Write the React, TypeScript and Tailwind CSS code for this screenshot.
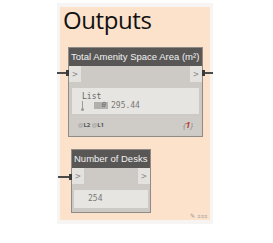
import React from "react";

function Port() {
  return (
    <div className="w-[12px] h-[16px] bg-[#e4e2de] flex items-center justify-center text-[9px] text-[#8a8a8a] leading-none" style={{ fontFamily: "'DejaVu Sans Mono', monospace" }}>
      &gt;
    </div>
  );
}

export default function App() {
  return (
    <div className="w-[273px] h-[243px] bg-white relative" style={{ fontFamily: "'Open Sans', 'Noto Sans', sans-serif" }}>
      <div className="absolute left-[57px] top-[3px] w-[156px] h-[221px] bg-[#f6f5f4] px-[3px] py-[4px]">
        <div className="w-full h-full bg-[#fce1cb] relative flex flex-col">
          <div className="pl-[3px] pt-[1px] text-[24px] leading-[24px] text-[#111] tracking-[-0.4px]">Outputs</div>

          {/* Node 1 */}
          <div className="relative ml-[8px] mt-[15px] w-[135px] border border-[#8f8c88] bg-[#cdcac6] flex flex-col">
            <div className="absolute left-[-12px] top-[24px] w-[12px] h-[2px] bg-[#4a4a4a]" />
            <div className="absolute left-[-3px] top-[22px] w-[3px] h-[6px] bg-[#3a3a3a]" />
            <div className="absolute right-[-11px] top-[24px] w-[11px] h-[2px] bg-[#4a4a4a]" />
            <div className="absolute right-[-3px] top-[22px] w-[3px] h-[6px] bg-[#3a3a3a]" />
            <div className="h-[18px] bg-[#585756] text-[#f2f2f2] text-[9.5px] leading-[18px] pl-[2px] whitespace-nowrap" style={{ fontFamily: "'Liberation Sans', Arial, sans-serif" }}>
              Total Amenity Space Area (m²)
            </div>
            <div className="h-[16px] flex justify-between">
              <Port />
              <Port />
            </div>
            <div className="mx-[3px] mt-[6px] h-[26px] bg-[#e7e5e1] relative text-[8px] text-[#666]" style={{ fontFamily: "'DejaVu Sans Mono', monospace" }}>
              <div className="absolute left-[10px] top-[4px] leading-[9px]">List</div>
              <div className="absolute left-[10px] top-[13px] w-[1px] h-[8px] bg-[#999]" />
              <div className="absolute left-[9px] top-[20px] w-[3px] h-[3px] rounded-full bg-[#999]" />
              <div className="absolute left-[22px] top-[14px] w-[14px] h-[7px] bg-[#b2b0ad] text-[7px] leading-[7px] text-right pr-[2px] italic text-[#666]">0</div>
              <div className="absolute left-[39px] top-[13px] leading-[9px] text-[#777]">295.44</div>
            </div>
            <div className="mx-[1px] mt-[2px] mb-[2px] h-[18px] bg-[#cfccc8] flex items-center justify-between px-[8px] text-[6px] text-[#555] font-bold">
              <span><span className="text-[#aaa]">@</span>L2 <span className="text-[#aaa]">@</span>L1</span>
              <span className="text-[8px] text-[#888] italic font-normal">{"{"}<span className="text-[#c0392b] font-bold">1</span>{"}"}</span>
            </div>
          </div>

          {/* Node 2 */}
          <div className="relative ml-[11px] mt-[12px] w-[80px] border border-[#8f8c88] bg-[#cdcac6] flex flex-col">
            <div className="absolute left-[-14px] top-[26px] w-[14px] h-[2px] bg-[#4a4a4a]" />
            <div className="absolute left-[-3px] top-[24px] w-[3px] h-[6px] bg-[#3a3a3a]" />
            <div className="h-[18px] bg-[#585756] text-[#f2f2f2] text-[9.5px] leading-[18px] pl-[2px] whitespace-nowrap" style={{ fontFamily: "'Liberation Sans', Arial, sans-serif" }}>
              Number of Desks
            </div>
            <div className="h-[17px] flex justify-between">
              <Port />
              <Port />
            </div>
            <div className="mx-[2px] mt-[5px] mb-[4px] h-[18px] bg-[#e7e5e1] text-[8px] text-[#777] leading-[18px] pl-[14px]" style={{ fontFamily: "'DejaVu Sans Mono', monospace" }}>
              254
            </div>
          </div>

          <div className="absolute right-[2px] bottom-[1px] flex items-center gap-[3px] text-[5px] text-[#999] leading-none">
            <span className="text-[6px]">✎</span>
            <span className="tracking-[0.5px]">≡≡≡</span>
          </div>
        </div>
      </div>
    </div>
  );
}
